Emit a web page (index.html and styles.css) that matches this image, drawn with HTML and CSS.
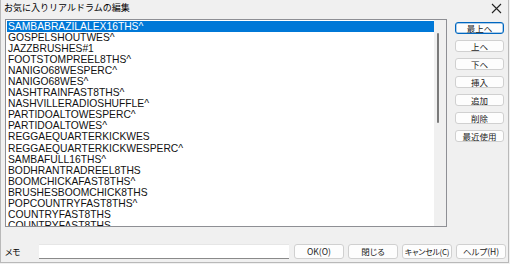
FILE: index.html
```html
<!DOCTYPE html>
<html lang="ja">
<head>
<meta charset="utf-8">
<link rel="stylesheet" href="styles.css">
</head>
<body>
<div class="window">
  <div class="titlebar">
    <span class="title">お気に入りリアルドラムの編集</span>
    <svg class="close" width="11" height="11" viewBox="0 0 11 11"><path d="M1 1L10 10M10 1L1 10" stroke="#222" stroke-width="1.1" fill="none"/></svg>
  </div>
  <div class="main">
    <div class="listbox">
      <div class="items">
        <div class="item selected">SAMBABRAZILALEX16THS^</div>
        <div class="item">GOSPELSHOUTWES^</div>
        <div class="item">JAZZBRUSHES#1</div>
        <div class="item">FOOTSTOMPREEL8THS^</div>
        <div class="item">NANIGO68WESPERC^</div>
        <div class="item">NANIGO68WES^</div>
        <div class="item">NASHTRAINFAST8THS^</div>
        <div class="item">NASHVILLERADIOSHUFFLE^</div>
        <div class="item">PARTIDOALTOWESPERC^</div>
        <div class="item">PARTIDOALTOWES^</div>
        <div class="item">REGGAEQUARTERKICKWES</div>
        <div class="item">REGGAEQUARTERKICKWESPERC^</div>
        <div class="item">SAMBAFULL16THS^</div>
        <div class="item">BODHRANTRADREEL8THS</div>
        <div class="item">BOOMCHICKAFAST8THS^</div>
        <div class="item">BRUSHESBOOMCHICK8THS</div>
        <div class="item">POPCOUNTRYFAST8THS^</div>
        <div class="item">COUNTRYFAST8THS</div>
        <div class="item">COUNTRYFAST8THS</div>
      </div>
      <div class="scrollbar"><div class="thumb"></div></div>
    </div>
    <div class="side">
      <button class="btn default">最上へ</button>
      <button class="btn">上へ</button>
      <button class="btn">下へ</button>
      <button class="btn">挿入</button>
      <button class="btn">追加</button>
      <button class="btn">削除</button>
      <button class="btn">最近使用</button>
    </div>
  </div>
  <div class="bottom">
    <span class="memo-label">メモ</span>
    <div class="memo"></div>
    <div class="actions">
      <button class="btn wide">OK(O)</button>
      <button class="btn wide">閉じる</button>
      <button class="btn wide tight">キャンセル(C)</button>
      <button class="btn wide">ヘルプ(H)</button>
    </div>
  </div>
</div>
</body>
</html>
```
FILE: styles.css
```css
* { box-sizing: border-box; }
html, body { margin: 0; padding: 0; }
body {
  width: 510px;
  height: 264px;
  background: #f0f0f0;
  overflow: hidden;
  font-family: "Noto Sans CJK JP", "Liberation Sans", sans-serif;
  font-feature-settings: "palt";
}
.window {
  width: 509px;
  height: 263px;
  border-left: 1px solid #b9b9b9;
  border-right: 1px solid #b9b9b9;
  border-bottom: 1px solid #b9b9b9;
  display: flex;
  flex-direction: column;
}
.titlebar {
  height: 19px;
  display: flex;
  align-items: flex-start;
  justify-content: space-between;
  padding: 1px 6px 0 3px;
}
.title {
  font-size: 9px;
  line-height: 13px;
  color: #000;
  font-feature-settings: normal;
}
.close { margin-top: 2px; }
.main {
  display: flex;
  padding-left: 4px;
  height: 208px;
}
.listbox {
  width: 442px;
  height: 208px;
  border: 1px solid #8e8f94;
  background: #fff;
  display: flex;
  overflow: hidden;
}
.items {
  flex: 1;
  padding: 1px 0 0 1px;
  overflow: hidden;
}
.item {
  height: 11.06px;
  line-height: 11px;
  font-family: "Liberation Sans", Arial, sans-serif;
  font-size: 10.3px;
  padding-left: 1px;
  color: #111;
  white-space: nowrap;
}
.item.selected {
  background: #0078d7;
  color: #fff;
}
.scrollbar {
  width: 12px;
  background: #f0f0f0;
}
.thumb {
  margin: 13px 0 0 3px;
  width: 2px;
  height: 90px;
  background: #7a7a7a;
  border-radius: 1px;
}
.side {
  margin-left: 8px;
  padding-top: 3px;
  display: flex;
  flex-direction: column;
  gap: 6px;
}
.btn {
  width: 49px;
  height: 12px;
  padding: 0;
  margin: 0;
  border: 1px solid #d0d0d0;
  border-radius: 3px;
  background: #fdfdfd;
  font-family: "Noto Sans CJK JP", "Liberation Sans", sans-serif;
  font-feature-settings: "palt";
  font-size: 8.5px;
  line-height: 10px;
  color: #1a1a1a;
  text-align: center;
  white-space: nowrap;
  overflow: hidden;
}
.btn.default {
  border: 1px solid #0067c0;
  box-shadow: inset 0 0 0 0.5px #5a9bd5;
}
.bottom {
  display: flex;
  align-items: center;
  margin-top: 16px;
  padding-left: 4px;
  height: 16px;
}
.memo-label {
  width: 34px;
  font-size: 8.5px;
  color: #000;
}
.memo {
  width: 250px;
  height: 15px;
  background: #fff;
  border-bottom: 1px solid #8a8a8a;
  border-top: 1px solid #e6e6e6;
}
.actions {
  display: flex;
  gap: 4px;
  margin-left: 5px;
}
.btn.wide {
  width: 50px;
  height: 15px;
  line-height: 13px;
}
.btn.tight {
  font-size: 8px;
  letter-spacing: -0.3px;
}
```
